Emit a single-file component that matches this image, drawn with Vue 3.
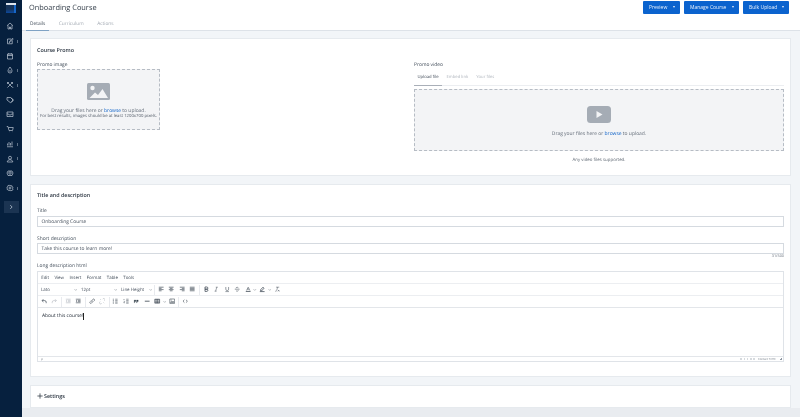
<script setup>
const navIcons = [
  { d: 'M2 7.5 8 2l6 5.5M4 6.5V14h3v-4h2v4h3V6.5', arrow: false },
  { d: 'M3 4h7M3 4v9.500h9.500V7M7 9l6-6.500 1.500 1.500L8 10.500 6.500 11z', arrow: true },
  { d: 'M3 4h10v10H3zM3 7h10M5.500 2v3M10.500 2v3', arrow: false },
  { d: 'M8 2c2.500 3.500 4 5.500 4 8a4 4 0 0 1-8 0c0-2.500 1.500-4.500 4-8zM8 8v4', arrow: true },
  { d: 'M3 3l10 10M13 3 3 13M3 3h3M3 3v3M12 11l2 2M10 3h3v3', arrow: true },
  { d: 'M2 3h7l5 5-5 5.500-7-5.500zM5 6h.5M10 3l5 5-4 5', arrow: false },
  { d: 'M2 4h12v9H2zM2 8h3l1.500 2h3L11 8h3', arrow: false },
  { d: 'M1.500 3h2.500l2 8h7l1.500-6H5M6.500 13.500h.5M12 13.500h.5', arrow: false },
  { d: 'M2 13.500h12M3 11V7M6 11V4M9 11V6M12 11V3', arrow: true },
  { d: 'M5 5.500a3 3 0 1 0 6 0 3 3 0 1 0-6 0M2.500 14c0-3 2.500-4.500 5.500-4.500s5.500 1.500 5.500 4.500z', arrow: true },
  { d: 'M4 4h8l2 4-2 5H4L2 8zM5.500 8a2.500 2.500 0 1 0 5 0 2.500 2.500 0 1 0-5 0', arrow: false },
  { d: 'M8 2l1.500 1.800 2.300-.3.400 2.300 2 1.200-1 2 1 2-2 1.200-.4 1-2.300-.3L8 14l-1.500-1.800-2.300.3-.4-1-2-1.200 1-2-1-2 2-1.200.4-2.300 2.300.3zM6 8a2 2 0 1 0 4 0 2 2 0 1 0-4 0', arrow: true }
]
const actions = ['Preview', 'Manage Course', 'Bulk Upload']
const pageTabs = ['Details', 'Curriculum', 'Actions']
const videoTabs = ['Upload file', 'Embed link', 'Your files']
const menus = ['Edit', 'View', 'Insert', 'Format', 'Table', 'Tools']
const selects = [
  { label: 'Lato', cls: 'sel-font' },
  { label: '12pt', cls: 'sel-size' },
  { label: 'Line Height', cls: 'sel-line' }
]
const groupA = [
  'M2 3h12M2 6h7M2 9h12M2 12h7',
  'M2 3h12M4.500 6h7M2 9h12M4.500 12h7',
  'M2 3h12M7 6h7M2 9h12M7 12h7',
  'M2 3h12M2 6h12M2 9h12M2 12h12'
]
const groupB = [
  { d: 'M5 2.500h4.500a2.500 2.500 0 0 1 0 5.500H5zM5 8h5a2.800 2.800 0 0 1 0 5.500H5z', w: 1.8 },
  { d: 'M7 3h5M4 13h5M9.500 3l-3 10', w: 1.2 },
  { d: 'M4.500 2.500V8a3.500 3.500 0 0 0 7 0V2.500M3.500 14h9', w: 1.3 },
  { d: 'M2 8h12M11 4.500C10 3 5 2.500 5 5.500M5 11.500c1 2 6 2 6-.5', w: 1.3 }
]
</script>

<template>
  <div class="app">
    <aside class="rail">
      <div class="logo"><i class="logo-top"></i><i class="logo-side"></i></div>
      <div class="nav">
        <div v-for="(icon, i) in navIcons" :key="i" class="nav-item">
          <svg viewBox="0 0 16 16" class="nav-icon"><path :d="icon.d" /></svg>
          <i v-if="icon.arrow" class="nav-mark"></i>
        </div>
      </div>
      <button class="expand"><svg viewBox="0 0 8 8"><path d="M3 1.500 5.500 4 3 6.500" /></svg></button>
    </aside>

    <main class="page">
      <header class="top">
        <div class="top-row">
          <h1>Onboarding Course</h1>
          <div class="actions">
            <button v-for="a in actions" :key="a" class="btn">{{ a }}<i class="caret"></i></button>
          </div>
        </div>
        <nav class="page-tabs">
          <span v-for="(t, i) in pageTabs" :key="t" class="page-tab" :class="{ on: i === 0 }">{{ t }}</span>
        </nav>
      </header>

      <div class="body">
        <section class="card promo">
          <h2>Course Promo</h2>
          <div class="promo-cols">
            <div class="col-image">
              <div class="label">Promo image</div>
              <div class="drop drop-image">
                <svg class="ph-image" viewBox="0 0 23 17">
                  <rect width="23" height="17" rx="1.500" fill="#a5acb5" />
                  <circle cx="5.500" cy="5" r="2.200" fill="#f3f4f6" />
                  <path d="M2.500 15 8 9.500l3 2.500 4.500-6L21 15z" fill="#f3f4f6" />
                </svg>
                <p>Drag your files here or <a>browse</a> to upload.</p>
                <p class="tiny">For best results, images should be at least 1200x700 pixels.</p>
              </div>
            </div>
            <div class="col-video">
              <div class="label">Promo video</div>
              <div class="video-tabs">
                <span v-for="(t, i) in videoTabs" :key="t" class="video-tab" :class="{ on: i === 0 }">{{ t }}</span>
              </div>
              <div class="drop drop-video">
                <svg class="ph-video" viewBox="0 0 24 17">
                  <rect width="24" height="17" rx="3.500" fill="#a5acb5" />
                  <path d="M9.500 5v7l6-3.500z" fill="#f3f4f6" />
                </svg>
                <p>Drag your files here or <a>browse</a> to upload.</p>
              </div>
              <p class="supported">Any video files supported.</p>
            </div>
          </div>
        </section>

        <section class="card details">
          <h2>Title and description</h2>
          <div class="label label-title">Title</div>
          <div class="input">Onboarding Course</div>
          <div class="label label-short">Short description</div>
          <div class="input">Take this course to learn more!</div>
          <div class="count">31/500</div>
          <div class="label">Long description html</div>
          <div class="editor">
            <div class="menu"><span v-for="m in menus" :key="m">{{ m }}</span></div>
            <div class="bar">
              <div class="group selects">
                <span v-for="s in selects" :key="s.label" class="sel" :class="s.cls">{{ s.label }}
                  <svg viewBox="0 0 8 8" class="chev"><path d="M1 2.500 4 5.500 7 2.500" /></svg>
                </span>
              </div>
              <div class="group">
                <svg v-for="d in groupA" :key="d" class="tool" viewBox="0 0 16 16"><path :d="d" stroke-width="1.600" /></svg>
              </div>
              <div class="group code">
                <svg v-for="b in groupB" :key="b.d" class="tool" viewBox="0 0 16 16"><path :d="b.d" :stroke-width="b.w" /></svg>
                <svg class="tool" viewBox="0 0 16 16"><path d="M4 11 8 3l4 8M5.500 8h5" stroke-width="1.300" /><path d="M2 13.500h12" stroke-width="2" /></svg>
                <svg class="chev free" viewBox="0 0 8 8"><path d="M1 2.500 4 5.500 7 2.500" /></svg>
                <svg class="tool" viewBox="0 0 16 16"><path d="M4 9.500 10 3l2.500 2.500L7 12H4zM2 14h12" stroke-width="1.800" /></svg>
                <svg class="chev free" viewBox="0 0 8 8"><path d="M1 2.500 4 5.500 7 2.500" /></svg>
                <svg class="tool" viewBox="0 0 16 16"><path d="M5 3h8M9 3l-2.500 9M3 13l3 0M10 10l3.500 3.500M13.500 10 10 13.500" stroke-width="1.200" /></svg>
              </div>
            </div>
            <div class="bar">
              <div class="group">
                <svg class="tool" viewBox="0 0 16 16"><path d="M6 3 2.500 6.500 6 10M3 6.500h6a4 4 0 0 1 4 4V13" stroke-width="1.700" /></svg>
                <svg class="tool dim" viewBox="0 0 16 16"><path d="M10 3l3.500 3.500L10 10M13 6.500H7a4 4 0 0 0-4 4V13" stroke-width="1.300" /></svg>
              </div>
              <div class="group">
                <svg class="tool dim" viewBox="0 0 16 16"><path d="M2 3h12M7 6h7M7 9h7M2 12h12M5 6 2.500 7.500 5 9" stroke-width="1.300" /></svg>
                <svg class="tool" viewBox="0 0 16 16"><path d="M2 3h12M7 6h7M7 9h7M2 12h12M2.500 6 5 7.500 2.500 9" stroke-width="1.500" /></svg>
              </div>
              <div class="group">
                <svg class="tool" viewBox="0 0 16 16"><path d="M7 9.500a2.500 2.500 0 0 1 0-3.500l3-3a2.500 2.500 0 0 1 3.500 3.500l-1.500 1.500M9 6.500a2.500 2.500 0 0 1 0 3.500l-3 3A2.500 2.500 0 0 1 2.500 9.500L4 8" stroke-width="1.400" /></svg>
                <svg class="tool dim" viewBox="0 0 16 16"><path d="M9 3l1-1a2.500 2.500 0 0 1 4 4l-1 1M7 13l-1 1a2.500 2.500 0 0 1-4-4l1-1M11 11l2 2M3 3l2 2" stroke-width="1.300" /></svg>
              </div>
              <div class="group">
                <svg class="tool" viewBox="0 0 16 16"><path d="M2 3h3M2 6.500h3M2 10h3M2 13h3M8 3h6M8 6.500h6M8 10h6M8 13h6" stroke-width="1.300" /></svg>
                <svg class="tool" viewBox="0 0 16 16"><path d="M2.500 2.500v3M2 9h2l-2 3h2.200M8 3h6M8 6.500h6M8 10h6M8 13h6" stroke-width="1.300" /></svg>
                <svg class="tool" viewBox="0 0 16 16"><path d="M3 5h4v4H5l-1 3H3zM9 5h4v4h-2l-1 3H9z" fill="#37424e" stroke-width="0.600" /></svg>
                <svg class="tool" viewBox="0 0 16 16"><path d="M2 8h12" stroke-width="2" /></svg>
                <svg class="tool" viewBox="0 0 16 16"><path d="M2 3h12v10H2zM2 4.500h12M2 8h12M2 11h12M8 3v10" stroke-width="1.500" /></svg>
                <svg class="chev free" viewBox="0 0 8 8"><path d="M1 2.500 4 5.500 7 2.500" /></svg>
                <svg class="tool" viewBox="0 0 16 16"><path d="M2 2.500h12v11H2zM4 11l3-3.500 2 2 1.500-1.500L12 11zM4.500 5h2" stroke-width="1.400" /></svg>
              </div>
              <div class="group code">
                <svg class="tool" viewBox="0 0 16 16"><path d="M6 4.500 2.500 8 6 11.500M10 4.500 13.500 8 10 11.500" stroke-width="1.500" /></svg>
              </div>
            </div>
            <div class="content">About this course!<i class="cursor"></i></div>
            <div class="status">
              <span class="path">p</span>
              <span class="status-right"><i></i><i></i><i></i><i></i><i></i><span class="by">Contact TAHC</span><b class="grip"></b></span>
            </div>
          </div>
        </section>

        <section class="card settings">
          <svg class="plus" viewBox="0 0 8 8"><path d="M4 .5v7M.5 4h7" /></svg>
          <span>Settings</span>
        </section>
        <div class="foot"></div>
      </div>
    </main>
  </div>
</template>

<style scoped>
.app {
  display: flex;
  width: 800px;
  height: 417px;
  overflow: hidden;
  font-family: "Open Sans", "Noto Sans", sans-serif;
  text-rendering: geometricPrecision;
  filter: blur(.2px);
  color: #3b4552;
  background: #f2f5f8;
}
.rail {
  flex: 0 0 22px;
  display: flex;
  flex-direction: column;
  align-items: center;
  background: #06203e;
}
.logo {
  position: relative;
  width: 10px;
  height: 10px;
  margin-top: 3px;
  background: linear-gradient(#16345a 60%, #0d4a9e);
}
.logo-top {
  position: absolute;
  left: 0;
  top: 0;
  width: 10px;
  height: 2px;
  background: #dfe6ee;
}
.logo-side {
  position: absolute;
  right: 0;
  top: 2px;
  width: 2px;
  height: 8px;
  background: #1667c9;
}
.nav {
  display: flex;
  flex-direction: column;
  width: 100%;
  margin-top: 6px;
}
.nav-item {
  position: relative;
  height: 14.7px;
  display: flex;
  align-items: center;
  padding-left: 5.500px;
}
.nav-icon {
  width: 8px;
  height: 8px;
  fill: none;
  stroke: #dbe3ec;
  stroke-width: 1.200;
}
.nav-mark {
  position: absolute;
  right: 4px;
  top: 6px;
  width: 1px;
  height: 3px;
  background: #5d7086;
}
.expand {
  display: flex;
  align-items: center;
  justify-content: center;
  width: 15px;
  height: 12px;
  margin-top: 6px;
  padding: 0;
  border: 0;
  background: #1b3452;
}
.expand svg {
  width: 6px;
  height: 6px;
  fill: none;
  stroke: #c4d0dc;
  stroke-width: 1;
}
.page {
  flex: 1;
  min-width: 0;
  display: flex;
  flex-direction: column;
}
.top {
  flex: 0 0 31px;
  box-sizing: border-box;
  padding: 1px 11px 0 7px;
  background: #fff;
  border-bottom: 1px solid #dde2e8;
  display: flex;
  flex-direction: column;
}
.top-row {
  display: flex;
  justify-content: space-between;
  align-items: flex-start;
}
h1 {
  margin: 0;
  font-size: 7.400px;
  line-height: 14px;
  font-weight: 400;
  color: #36404c;
}
.actions {
  display: flex;
  gap: 4px;
}
.btn {
  display: flex;
  align-items: center;
  justify-content: space-between;
  box-sizing: border-box;
  height: 12.500px;
  padding: 0 5px 0 6px;
  border: 0;
  border-radius: 1px;
  background: #0b63ce;
  color: #e9f1fb;
  font-family: inherit;
  font-size: 5px;
}
.btn:nth-child(1) { width: 37px; }
.btn:nth-child(2) { width: 55px; }
.btn:nth-child(3) { width: 46px; }
.caret {
  width: 0;
  height: 0;
  border-left: 1.700px solid transparent;
  border-right: 1.700px solid transparent;
  border-top: 2px solid #e9f1fb;
}
.page-tabs {
  display: flex;
  gap: 5.500px;
  margin-top: auto;
  margin-left: -3px;
}
.page-tab {
  padding: 0 4px 2.500px;
  margin-bottom: -1px;
  font-size: 4.800px;
  line-height: 6.500px;
  color: #a4abb4;
  border-bottom: 1px solid transparent;
}
.page-tab.on {
  color: #3f4a57;
  border-bottom-color: #7fa2c4;
}
.body {
  flex: 1;
  padding: 7px 9px 0 8px;
  display: flex;
  flex-direction: column;
}
.card {
  background: #fff;
  border: 1px solid #e6eaee;
  box-sizing: border-box;
}
h2 {
  margin: 0;
  font-size: 5.400px;
  line-height: 8px;
  font-weight: 600;
  color: #2c3642;
}
.promo {
  height: 138px;
  padding: 6.500px 6px 0;
  margin-bottom: 8px;
}
.promo-cols {
  display: flex;
  justify-content: space-between;
  margin-top: 7.500px;
}
.label {
  font-size: 4.900px;
  line-height: 8px;
  color: #3f4a57;
}
.col-image {
  width: 123px;
}
.col-video {
  width: 370px;
}
.drop {
  box-sizing: border-box;
  border: 1px dashed #b6bcc4;
  background: #f3f4f6;
  display: flex;
  flex-direction: column;
  align-items: center;
}
.drop p {
  margin: 0;
  font-size: 4.950px;
  line-height: 6.500px;
  color: #646d79;
}
.drop p.tiny {
  font-size: 4.250px;
  line-height: 5.800px;
  color: #505965;
}
.drop a {
  color: #0e62c8;
}
.drop-image {
  height: 61px;
  padding-top: 13px;
}
.ph-image {
  width: 23px;
  height: 17px;
  margin-bottom: 7.500px;
}
.video-tabs {
  display: flex;
  margin-top: 5px;
  border-bottom: 1.500px solid #eceef1;
}
.video-tab {
  padding: 0 3.500px 3px;
  margin-right: 1px;
  margin-bottom: -1.500px;
  font-size: 4.200px;
  line-height: 8px;
  color: #b0b6be;
  border-bottom: 1.500px solid transparent;
}
.video-tab.on {
  color: #454f5c;
  border-bottom-color: #a9afb8;
}
.drop-video {
  height: 62px;
  margin-top: 3.500px;
  padding-top: 16px;
}
.ph-video {
  width: 24px;
  height: 17px;
  margin-bottom: 7.800px;
}
.supported {
  margin: 5.500px 0 0;
  text-align: center;
  font-size: 4.400px;
  line-height: 6px;
  color: #5f6873;
}
.details {
  height: 193px;
  padding: 6px 6px 0;
  margin-bottom: 8px;
}
.label-title {
  margin-top: 8px;
}
.label-short {
  margin-top: 8px;
}
.input {
  box-sizing: border-box;
  height: 11px;
  margin-top: .5px;
  padding-left: 3.500px;
  border: 1px solid #d5dae0;
  font-size: 4.900px;
  line-height: 10px;
  color: #454f5c;
}
.count {
  height: 7.500px;
  text-align: right;
  font-size: 3.800px;
  line-height: 6.500px;
  color: #6e7782;
}
.editor {
  height: 91.500px;
  box-sizing: border-box;
  margin-top: 1px;
  border: 1px solid #dfe3e8;
  display: flex;
  flex-direction: column;
}
.menu {
  flex: 0 0 11px;
  box-sizing: border-box;
  padding-top: 1px;
  display: flex;
  align-items: center;
  gap: 5.400px;
  padding-left: 3.200px;
  font-size: 4.400px;
  color: #3f4a57;
}
.bar {
  flex: 0 0 12px;
  display: flex;
  align-items: stretch;
  border-top: 1px solid #eceef1;
  box-sizing: border-box;
  padding-top: 1px;
}
.group {
  display: flex;
  align-items: center;
  gap: 4.100px;
  padding: 0 3.200px 0 2.800px;
  border-right: 1px solid #e8eaee;
}
.group.code {
  border-right: 0;
}
.selects {
  gap: 0;
  font-size: 4.400px;
  color: #454f5c;
  padding: 0 2px 0 3px;
}
.sel {
  display: flex;
  align-items: center;
  justify-content: space-between;
  box-sizing: border-box;
}
.sel-font {
  width: 38px;
  padding-right: 2px;
}
.sel-size {
  width: 40px;
  padding: 0 2px;
}
.sel-line {
  width: 33px;
  padding-left: 2px;
}
.chev {
  width: 3.500px;
  height: 3.500px;
  fill: none;
  stroke: #69727e;
  stroke-width: 1;
}
.chev.free {
  margin: 0 -1.500px 0 -2px;
}
.tool {
  width: 6.400px;
  height: 6.400px;
  fill: none;
  stroke: #37424e;
}
.tool.dim {
  stroke: #a8aeb6;
}
.content {
  flex: 1;
  border-top: 1px solid #e3e6ea;
  padding: 5.500px 0 0 4px;
  font-size: 4.900px;
  line-height: 7px;
  color: #262f3a;
  display: flex;
  align-items: flex-start;
}
.cursor {
  width: .6px;
  height: 6.500px;
  background: #222;
}
.status {
  flex: 0 0 5.500px;
  box-sizing: border-box;
  border-top: 1px solid #e3e6ea;
  display: flex;
  justify-content: space-between;
  align-items: center;
  padding: 0 1px 0 3px;
  font-size: 3px;
  color: #7d858f;
}
.status-right {
  display: flex;
  align-items: center;
  gap: 1.700px;
}
.status-right i {
  width: 1.500px;
  height: 2px;
  background: #d6dade;
}
.by {
  font-size: 2.800px;
  margin: 0 1.500px;
}
.grip {
  width: 3px;
  height: 3px;
  background: linear-gradient(135deg, transparent 50%, #8f98a3 50%);
}
.settings {
  flex: 0 0 22.500px;
  display: flex;
  align-items: center;
  gap: 1px;
  padding-left: 6px;
  font-size: 5.400px;
  font-weight: 600;
  color: #2c3642;
}
.plus {
  width: 6px;
  height: 6px;
  fill: none;
  stroke: #2c3642;
  stroke-width: 1;
}
.foot {
  flex: 1;
  margin: 0 -9px 0 -8px;
  background: #e9ecf0;
}
</style>
